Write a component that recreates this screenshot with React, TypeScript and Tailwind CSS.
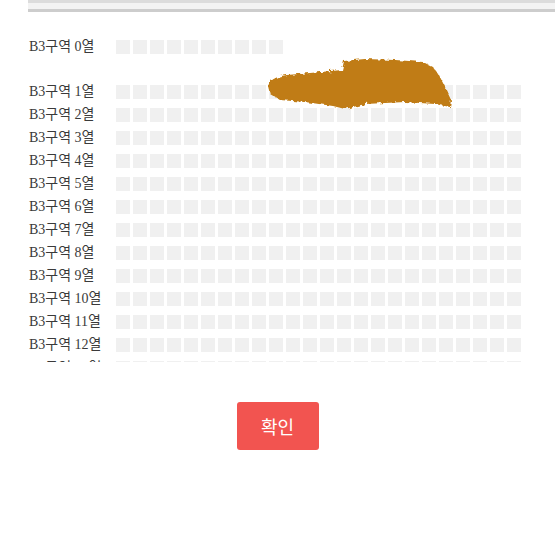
import React from "react";

const rows = [
  { label: "B3구역 0열", seats: 10 },
  null,
  ...Array.from({ length: 13 }, (_, i) => ({ label: `B3구역 ${i + 1}열`, seats: 24 })),
];

function Seat() {
  return <div className="h-[14px] w-[14px] shrink-0 bg-[#f0f0f0]" />;
}

export default function App() {
  return (
    <div className="relative h-[555px] w-[555px] overflow-hidden bg-white">
      {/* top edge of the previous panel */}
      <div className="ml-[28px] h-[12px] border-y-[3px] border-t-[#dcdcdc] border-b-[#cdcdcd] bg-[#f3f3f3]" />

      {/* seat list, scrolled */}
      <div className="mt-[23px] h-[327px] overflow-hidden pl-[29px]">
        {rows.map((row, i) =>
          row ? (
            <div key={i} className="flex h-[23px] items-center">
              <span className="w-[87px] shrink-0 text-[14px] text-[#3a3a3a] [font-family:'Liberation_Serif','Noto_Sans_CJK_KR',serif]">
                {row.label}
              </span>
              <div className="flex gap-[3px]">
                {Array.from({ length: row.seats }, (_, j) => (
                  <Seat key={j} />
                ))}
              </div>
            </div>
          ) : (
            <div key={i} className="h-[22px]" />
          )
        )}
      </div>

      <div className="mt-[40px] flex justify-center">
        <button className="h-[48px] w-[82px] rounded-[3px] bg-[#f25450] text-[18px] text-white [font-family:'Noto_Sans_CJK_KR',sans-serif]">
          확인
        </button>
      </div>

      {/* redaction scribble */}
      <svg
        className="absolute left-[265px] top-[56px]"
        width="192"
        height="58"
        viewBox="0 0 192 58"
      >
        <defs>
          <filter id="rough" x="-10%" y="-20%" width="120%" height="140%">
            <feTurbulence type="fractalNoise" baseFrequency="0.25" numOctaves="2" seed="3" />
            <feDisplacementMap in="SourceGraphic" scale="5" />
          </filter>
        </defs>
        <path
          filter="url(#rough)"
          fill="#c07b12"
          d="M3 30 C6 22 14 20 22 19 L45 17 L77 14 L79 5 L100 3 L130 4 L158 6 L168 11 L174 19 L180 31 L186 44 L185 51 L170 48 L140 46 L100 48 L80 53 L68 50 L40 46 L15 44 L5 38 Z"
        />
      </svg>
    </div>
  );
}
